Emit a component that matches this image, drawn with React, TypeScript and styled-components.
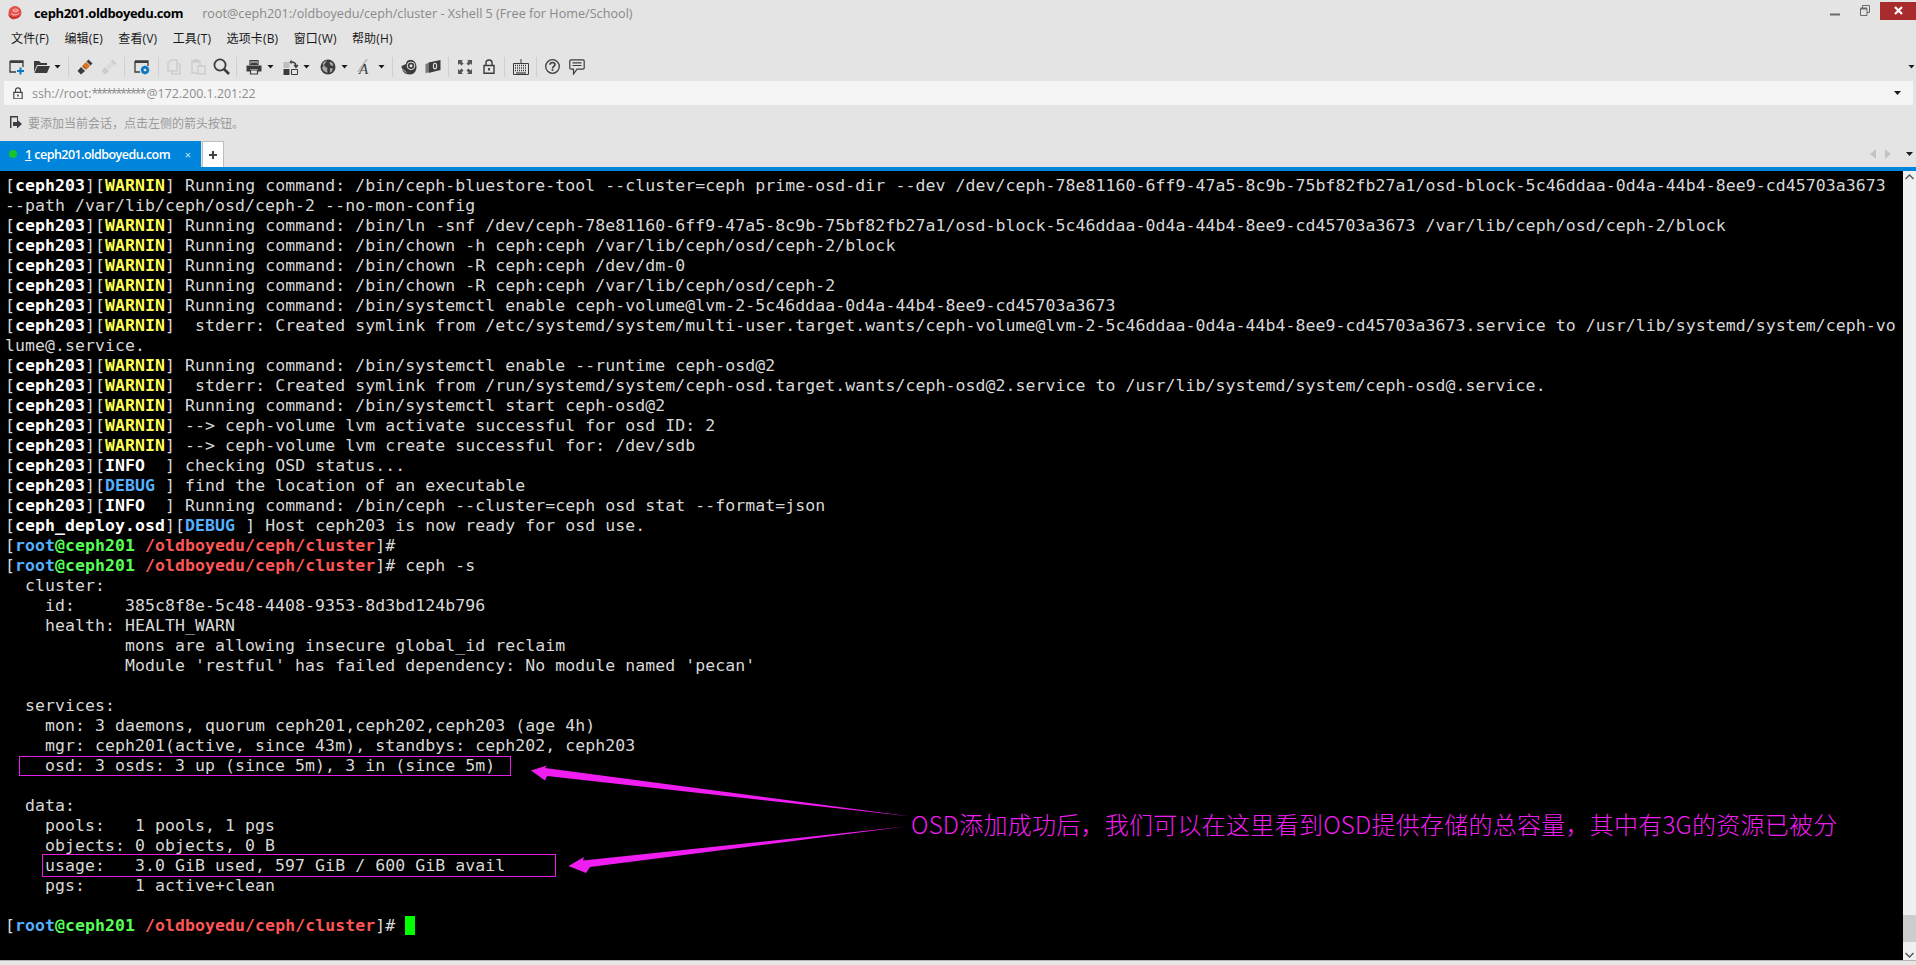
import React from "react"
import styled, { createGlobalStyle } from "styled-components"

const GlobalStyle = createGlobalStyle`
  html, body {
    margin: 0;
    padding: 0;
    background: #e4e4e4;
    overflow: hidden;
  }
  * { box-sizing: border-box; }
`

const uiFont = `"Open Sans", "Noto Sans CJK SC", sans-serif`

const Window = styled.div`
  width: 1916px;
  height: 965px;
  display: flex;
  flex-direction: column;
  background: #e4e4e4;
  font-family: ${uiFont};
  overflow: hidden;
`

const TitleBar = styled.div`
  height: 26px;
  display: flex;
  align-items: center;
  padding: 0 0 1px 7px;
  position: relative;
`

const SessionName = styled.span`
  margin-left: 12px;
  font-size: 13px;
  font-weight: 700;
  color: #000;
  letter-spacing: -0.36px;
`

const WindowTitle = styled.span`
  margin-left: 19px;
  font-size: 12.65px;
  color: #8a8a8a;
`

const WindowButtons = styled.div`
  margin-left: auto;
  height: 26px;
  display: flex;
  align-items: flex-start;
`

const WinButton = styled.div<{ $width: number; $danger?: boolean }>`
  width: ${(p) => p.$width}px;
  height: 18px;
  margin-top: 2px;
  display: flex;
  align-items: center;
  justify-content: center;
  background: ${(p) => (p.$danger ? "#a82c2c" : "transparent")};
`

const MenuBar = styled.div`
  height: 26px;
  display: flex;
  align-items: center;
  gap: 15.4px;
  padding: 0 0 2px 11px;
`

const MenuItem = styled.span`
  font-size: 12px;
  letter-spacing: 0.15px;
  color: #1a1a1a;
`

const ToolBar = styled.div`
  height: 29px;
  display: flex;
  align-items: center;
  padding-left: 9px;
  position: relative;
`

const ToolSlot = styled.div<{ $ml: number; $w: number }>`
  margin-left: ${(p) => p.$ml}px;
  width: ${(p) => p.$w}px;
  height: 20px;
  display: flex;
  align-items: center;
  justify-content: center;
`

const ToolSep = styled.div<{ $ml: number }>`
  margin-left: ${(p) => p.$ml}px;
  width: 1px;
  height: 20px;
  background: #cfcfcf;
`

const Caret = styled.div<{ $ml?: number; $color?: string }>`
  margin-left: ${(p) => p.$ml ?? 0}px;
  width: 7px;
  height: 4px;
  flex: none;
  background: ${(p) => p.$color ?? "#1c1c1c"};
  clip-path: polygon(0 0, 100% 0, 50% 100%);
`

const ToolEnd = styled(Caret)`
  margin-left: auto;
  margin-right: 1px;
`

const AddressBar = styled.div`
  height: 24px;
  margin: 0 3px 0 4px;
  background: #f5f5f5;
  display: flex;
  align-items: center;
  padding: 0 12px 0 9px;
`

const AddressText = styled.span`
  margin-left: 9px;
  font-size: 12.4px;
  color: #8c8c8c;
`

const Stars = styled.span`
  letter-spacing: -2px;
  margin-right: 2px;
`

const AddressCaret = styled(Caret)`
  margin-left: auto;
`

const HintBar = styled.div`
  height: 36px;
  display: flex;
  align-items: center;
  padding: 0 0 2px 9px;
`

const HintText = styled.span`
  margin-left: 6px;
  font-size: 12px;
  color: #9a9a9a;
  font-family: "Noto Sans CJK SC", sans-serif;
`

const TabStrip = styled.div`
  height: 26px;
  display: flex;
  align-items: stretch;
`

const Tab = styled.div`
  width: 201px;
  background: #0085dc;
  display: flex;
  align-items: center;
  padding-left: 9px;
  color: #fff;
`

const TabDot = styled.span`
  width: 8px;
  height: 8px;
  border-radius: 50%;
  background: #17c52a;
`

const TabLabel = styled.span`
  margin-left: 8px;
  font-size: 12.5px;
  font-weight: 600;
  letter-spacing: -0.54px;
`

const TabNumber = styled.span`
  text-decoration: underline;
`

const TabClose = styled.span`
  margin-left: auto;
  margin-right: 10px;
  font-size: 11px;
  color: #cfe6f7;
`

const NewTab = styled.div`
  margin-left: 1px;
  width: 22px;
  background: #fff;
  border: 1px solid #bdbdbd;
  border-bottom: none;
  display: flex;
  align-items: center;
  justify-content: center;
`

const TabNav = styled.div`
  margin-left: auto;
  padding-right: 3px;
  display: flex;
  align-items: center;
`

const NavArrow = styled.div<{ $flip?: boolean; $ml: number }>`
  margin-left: ${(p) => p.$ml}px;
  width: 6px;
  height: 10px;
  background: #c4c4c4;
  clip-path: ${(p) => (p.$flip ? "polygon(0 0, 100% 50%, 0 100%)" : "polygon(100% 0, 0 50%, 100% 100%)")};
`

const BlueRule = styled.div`
  height: 4px;
  background: #0085dc;
`

const TerminalRow = styled.div`
  height: 789px;
  display: flex;
`

const Terminal = styled.div`
  position: relative;
  flex: 1;
  background: #000;
  padding: 5px 0 0 5px;
  font-family: "DejaVu Sans Mono", monospace;
  font-size: 16.5px;
  letter-spacing: 0.07px;
  color: #d8d8d8;
  overflow: hidden;
`

const Line = styled.div`
  height: 20px;
  line-height: 20px;
  white-space: pre;
`

const Bold = styled.span<{ $color: string }>`
  font-weight: 700;
  color: ${(p) => p.$color};
`

const Cursor = styled.span`
  display: inline-block;
  width: 10px;
  height: 19px;
  background: #00ff00;
  vertical-align: top;
  margin-top: 0;
`

const Highlight = styled.div<{ $x: number; $y: number; $w: number; $h: number }>`
  position: absolute;
  left: ${(p) => p.$x}px;
  top: ${(p) => p.$y}px;
  width: ${(p) => p.$w}px;
  height: ${(p) => p.$h}px;
  border: 1px solid #e81ce8;
`

const ArrowLayer = styled.svg`
  position: absolute;
  left: 0;
  top: 0;
`

const Annotation = styled.div`
  position: absolute;
  left: 911px;
  top: 636px;
  height: 34px;
  line-height: 34px;
  font-family: "Noto Sans CJK SC", sans-serif;
  font-size: 24px;
  font-weight: 300;
  letter-spacing: 0.26px;
  color: #f01df0;
  white-space: pre;
`

const ScrollBar = styled.div`
  width: 13px;
  background: #f0f0f0;
  display: flex;
  flex-direction: column;
  align-items: center;
  position: relative;
`

const ScrollSpace = styled.div`
  flex: 1;
`

const ScrollThumb = styled.div`
  width: 13px;
  height: 27px;
  background: #cdcdcd;
  margin-bottom: 7px;
`

const ScrollEnd = styled.div`
  height: 11px;
  flex: none;
  display: flex;
  align-items: center;
`

const StatusStrip = styled.div`
  flex: 1;
  border-top: 1px solid #b4b4b4;
  background: #e6e6e6;
`

const dark = "#3c3c3c"
const soft = "#cdcdcd"

const IconNew = () => (
  <svg width="16" height="16" viewBox="0 0 16 16">
    <path d="M1 2h13v6M1 2v11h6" fill="none" stroke={dark} strokeWidth="1.3" />
    <path d="M1 2h13v2H1z" fill={dark} />
    <path d="M11.5 8.5v7M8 12h7" stroke="#0a79c2" strokeWidth="2" />
  </svg>
)

const IconOpen = () => (
  <svg width="17" height="16" viewBox="0 0 17 16">
    <path d="M1 2h5l2 2h6v2H4L1 13z" fill={dark} />
    <path d="M4.5 7H17l-3 7H1.5z" fill={dark} />
  </svg>
)

const IconPlug = ({ body, band }: { body: string; band: string }) => (
  <svg width="16" height="16" viewBox="0 0 16 16">
    <path d="M0.5 12l3.5-4 4 4-4 3.5z" fill={body} />
    <path d="M5 7l4-4 4 4-4 4z" fill={band} />
    <path d="M9.5 2.5l2-2 4 4-2 2z" fill={body} />
    <path d="M6 11.5l-2-2M8 9.5l-2-2" stroke={body} strokeWidth="1" />
  </svg>
)

const IconProps = () => (
  <svg width="16" height="16" viewBox="0 0 16 16">
    <path d="M1 2h13v5M1 2v11h5" fill="none" stroke={dark} strokeWidth="1.3" />
    <path d="M1 2h13v2H1z" fill={dark} />
    <circle cx="11" cy="11" r="3" fill="none" stroke="#0a79c2" strokeWidth="2" />
    <path d="M11 6.5v9M6.5 11h9M8 8l6 6M14 8l-6 6" stroke="#0a79c2" strokeWidth="1.2" />
    <circle cx="11" cy="11" r="1.3" fill="#e4e4e4" />
  </svg>
)

const IconCopy = () => (
  <svg width="16" height="16" viewBox="0 0 16 16" fill="none" stroke={soft} strokeWidth="1.4">
    <path d="M5 1h6v11H2V4z" />
    <path d="M11 5h3v10H6v-3" />
  </svg>
)

const IconPaste = () => (
  <svg width="16" height="16" viewBox="0 0 16 16" fill="none" stroke={soft} strokeWidth="1.4">
    <path d="M2 2h8v12H2z" />
    <path d="M8 7h7v8H8z" fill="#e4e4e4" />
    <path d="M4 1h4v2H4z" fill={soft} />
  </svg>
)

const IconSearch = () => (
  <svg width="17" height="17" viewBox="0 0 17 17" fill="none" stroke={dark}>
    <circle cx="7" cy="7" r="5.6" strokeWidth="1.8" />
    <path d="M11 11l5 5" strokeWidth="2.6" />
  </svg>
)

const IconPrint = () => (
  <svg width="16" height="16" viewBox="0 0 16 16">
    <path d="M4 1.5h8v4H4z" fill="none" stroke={dark} strokeWidth="1.2" />
    <path d="M5 3h6M5 4.5h6" stroke={dark} />
    <path d="M0.5 6.5h15v6H12V10H4v2.5H0.5z" fill={dark} />
    <path d="M4.5 11h7v4h-7z" fill="none" stroke={dark} strokeWidth="1.2" />
  </svg>
)

const IconTransfer = () => (
  <svg width="16" height="16" viewBox="0 0 16 16">
    <path d="M0.5 3h6v6h-6z" fill="#bdbdbd" />
    <path d="M0.5 10h6v6h-6z" fill={dark} />
    <path d="M8.5 10.5h6v5h-6z" fill="none" stroke={dark} />
    <path d="M8 3c3 0 5 1 5 4M11 6l2 2.5L15 6" fill="none" stroke={dark} strokeWidth="1.3" />
    <path d="M8.5 0.5v5L6.5 3z" fill={dark} />
  </svg>
)

const IconGlobe = () => (
  <svg width="16" height="16" viewBox="0 0 16 16">
    <circle cx="8" cy="8" r="7.5" fill={dark} />
    <path d="M7 1.5c-2 .6-4 2-4.5 4l2 1 1.5 2 1.5.3-.5 2.7 1 2c-3-.2-5-1.5-6-4.5" fill="#a8a8a8" />
    <path d="M10 2.5l2.5 1.5 1 3-2.5-.5-1.5-2zM10 9l3 .5-1.5 3.5-1.5.5z" fill="#a8a8a8" />
  </svg>
)

const IconFont = () => (
  <svg width="16" height="20" viewBox="0 0 16 20">
    <path d="M0 15L9 2h2L2 15z" fill="#b8b8b8" />
    <text x="2" y="17" fontFamily="Liberation Serif, serif" fontStyle="italic" fontSize="15" fill={dark}>A</text>
  </svg>
)

const IconShell = () => (
  <svg width="16" height="16" viewBox="0 0 16 16">
    <path d="M0.500 7c0 5 3.500 8.500 8.500 8.500 4 0 6.500-3.500 6.500-7.500S13 .8 9.500.8C6.500.8 5 3 5 5" fill={dark} />
    <circle cx="10" cy="6.800" r="3.800" fill="none" stroke="#e4e4e4" strokeWidth="1" />
    <circle cx="10" cy="6.800" r="1.500" fill="#e4e4e4" />
    <path d="M0.500 9.500l5 4" stroke="#e4e4e4" strokeWidth="0.800" />
  </svg>
)

const IconBook = () => (
  <svg width="16" height="16" viewBox="0 0 16 16">
    <path d="M0.500 5l3-1v9l-3 1.500z" fill="#777" />
    <path d="M3.500 3.500L15.500 1v10L3.500 14z" fill={dark} />
    <ellipse cx="10" cy="7" rx="1.600" ry="2.800" fill="none" stroke="#e4e4e4" strokeWidth="1.100" />
  </svg>
)

const IconFull = () => (
  <svg width="14" height="14" viewBox="0 0 14 14" fill="#555">
    <path d="M0 0h5L3.500 1.500 5.500 3.500 3.500 5.500 1.500 3.500 0 5z" />
    <path d="M14 0H9l1.500 1.500-2 2 2 2 2-2L14 5z" />
    <path d="M0 14h5l-1.500-1.500 2-2-2-2-2 2L0 9z" />
    <path d="M14 14H9l1.500-1.500-2-2 2-2 2 2L14 9z" />
  </svg>
)

const IconLock = ({ size = 12, color = dark }: { size?: number; color?: string }) => (
  <svg width={size} height={(size * 15) / 12} viewBox="0 0 12 15" fill="none" stroke={color} strokeWidth="1.400">
    <path d="M3 6V3.600C3 1.900 4.300 1 6 1s3 .9 3 2.600V6" />
    <path d="M1 6.500h10v7.800H1z" />
    <path d="M6 9v2.500" strokeWidth="1.800" />
  </svg>
)

const IconKeyboard = () => (
  <svg width="16" height="16" viewBox="0 0 16 16">
    <path d="M8 0v4" stroke={dark} />
    <path d="M0.500 4.500h15v11H0.500z" fill="none" stroke={dark} />
    <path d="M2 6.500h12M2 9h12M2 11.500h12" stroke={dark} strokeDasharray="1 1" strokeWidth="1.400" />
    <path d="M3 14h10" stroke={dark} strokeWidth="1.200" />
  </svg>
)

const IconHelp = () => (
  <svg width="15" height="15" viewBox="0 0 15 15" fill="none" stroke={dark} strokeWidth="1.300">
    <circle cx="7.500" cy="7.500" r="6.800" />
    <path d="M5 5.800c0-1.500 1.200-2.300 2.500-2.300s2.500.8 2.500 2.100c0 1.900-2.500 1.900-2.500 3.900" strokeWidth="1.600" />
    <path d="M7.500 10.200v1.700" strokeWidth="1.700" />
  </svg>
)

const IconChat = () => (
  <svg width="16" height="16" viewBox="0 0 16 16" fill="none" stroke={dark} strokeWidth="1.200">
    <path d="M2 .8h12c.7 0 1.200.5 1.200 1.200v7c0 .7-.5 1.200-1.200 1.200H8L4.500 15v-4.800H2C1.300 10.200.8 9.700.8 9V2C.8 1.300 1.300.8 2 .8z" />
    <path d="M3.500 3.800h9M3.500 6.500h9" />
  </svg>
)

const IconAddHint = () => (
  <svg width="13" height="14" viewBox="0 0 13 14">
    <path d="M1 1h8v5H8V2.500H2.500V13H1z" fill={dark} />
    <path d="M4 7h4V4.500L13 9l-5 4.500V11H4z" fill={dark} />
  </svg>
)

const Logo = () => (
  <svg width="15" height="15" viewBox="0 0 15 15">
    <circle cx="8" cy="7.500" r="6.500" fill="#e4504c" />
    <path d="M1 9c1.500-.3 2.500-1 3-2.500L1 9.500C2 12.500 4.500 14.500 8 14.500z" fill="#d23c39" />
    <path d="M4.500 8.500c2 2 5.500 2 7.500-.5M6 5.500c1-2 4-2 5 0-1 1-3 1.500-5 0z" fill="none" stroke="#f9bcb6" strokeWidth="1.100" />
    <path d="M3 11.500c3 1.800 7 1.500 10-1" fill="none" stroke="#ab1f1f" strokeWidth="1" />
  </svg>
)

type Tool =
  | { sep: number }
  | { caret: number }
  | { ml: number; w: number; icon: React.ReactNode }

const tools: Tool[] = [
  { ml: 0, w: 16, icon: <IconNew /> },
  { ml: 8, w: 17, icon: <IconOpen /> },
  { caret: 4 },
  { sep: 7 },
  { ml: 8, w: 16, icon: <IconPlug body={dark} band="#d9731f" /> },
  { ml: 8, w: 16, icon: <IconPlug body={soft} band="#dcdcdc" /> },
  { sep: 7 },
  { ml: 9, w: 16, icon: <IconProps /> },
  { sep: 8 },
  { ml: 7, w: 16, icon: <IconCopy /> },
  { ml: 8, w: 16, icon: <IconPaste /> },
  { ml: 7, w: 17, icon: <IconSearch /> },
  { sep: 6 },
  { ml: 9, w: 16, icon: <IconPrint /> },
  { caret: 5 },
  { ml: 9, w: 16, icon: <IconTransfer /> },
  { caret: 4 },
  { ml: 10, w: 16, icon: <IconGlobe /> },
  { caret: 5 },
  { ml: 9, w: 16, icon: <IconFont /> },
  { caret: 5 },
  { sep: 7 },
  { ml: 8, w: 16, icon: <IconShell /> },
  { ml: 8, w: 16, icon: <IconBook /> },
  { sep: 7 },
  { ml: 9, w: 14, icon: <IconFull /> },
  { ml: 11, w: 12, icon: <IconLock /> },
  { sep: 9 },
  { ml: 8, w: 16, icon: <IconKeyboard /> },
  { sep: 7 },
  { ml: 8, w: 15, icon: <IconHelp /> },
  { ml: 9, w: 16, icon: <IconChat /> },
]

const menus = ["文件(F)", "编辑(E)", "查看(V)", "工具(T)", "选项卡(B)", "窗口(W)", "帮助(H)"]

const WHITE = "#ffffff"
const YELLOW = "#ffff55"
const BLUE = "#55b0ff"
const GREEN = "#55ff55"
const RED = "#ff5555"

const levelColor: Record<string, string> = {
  "WARNIN": YELLOW,
  "INFO  ": WHITE,
  "DEBUG ": BLUE,
}

const Deploy = ({ level, text, host = "ceph203" }: { level: string; text: string; host?: string }) => (
  <Line>
    [<Bold $color={WHITE}>{host}</Bold>][<Bold $color={levelColor[level]}>{level}</Bold>] {text}
  </Line>
)

const Prompt = ({ children }: { children?: React.ReactNode }) => (
  <Line>
    [<Bold $color={BLUE}>root</Bold>
    <Bold $color={GREEN}>@ceph201</Bold> <Bold $color={RED}>/oldboyedu/ceph/cluster</Bold>]# {children}
  </Line>
)

const W = "WARNIN"

const statusLines = [
  "  cluster:",
  "    id:     385c8f8e-5c48-4408-9353-8d3bd124b796",
  "    health: HEALTH_WARN",
  "            mons are allowing insecure global_id reclaim",
  "            Module 'restful' has failed dependency: No module named 'pecan'",
  " ",
  "  services:",
  "    mon: 3 daemons, quorum ceph201,ceph202,ceph203 (age 4h)",
  "    mgr: ceph201(active, since 43m), standbys: ceph202, ceph203",
  "    osd: 3 osds: 3 up (since 5m), 3 in (since 5m)",
  " ",
  "  data:",
  "    pools:   1 pools, 1 pgs",
  "    objects: 0 objects, 0 B",
  "    usage:   3.0 GiB used, 597 GiB / 600 GiB avail",
  "    pgs:     1 active+clean",
  " ",
]

export default function App() {
  return (
    <>
      <GlobalStyle />
      <Window>
        <TitleBar>
          <Logo />
          <SessionName>ceph201.oldboyedu.com</SessionName>
          <WindowTitle>root@ceph201:/oldboyedu/ceph/cluster - Xshell 5 (Free for Home/School)</WindowTitle>
          <WindowButtons>
            <WinButton $width={30}>
              <svg width="10" height="18" viewBox="0 0 10 18">
                <path d="M0 12.500h10" stroke="#6a6a6a" strokeWidth="2" />
              </svg>
            </WinButton>
            <WinButton $width={30}>
              <svg width="10" height="11" viewBox="0 0 10 11" fill="none" stroke="#6a6a6a">
                <path d="M.5 3.500h6.500v7H.5zM2.500 3.500V.5h7v7H7" />
                <path d="M.5 3.500h6.500" strokeWidth="2" />
              </svg>
            </WinButton>
            <WinButton $width={36} $danger>
              <svg width="9" height="9" viewBox="0 0 9 9">
                <path d="M1 1l7 7M8 1l-7 7" stroke="#fff" strokeWidth="2.200" />
              </svg>
            </WinButton>
          </WindowButtons>
        </TitleBar>

        <MenuBar>
          {menus.map((m) => (
            <MenuItem key={m}>{m}</MenuItem>
          ))}
        </MenuBar>

        <ToolBar>
          {tools.map((t, i) => {
            if ("sep" in t) return <ToolSep key={i} $ml={t.sep} />
            if ("caret" in t) return <Caret key={i} $ml={t.caret} />
            return (
              <ToolSlot key={i} $ml={t.ml} $w={t.w}>
                {t.icon}
              </ToolSlot>
            )
          })}
          <ToolEnd />
        </ToolBar>

        <AddressBar>
          <IconLock size={10} color="#444" />
          <AddressText>
            ssh://root:<Stars>***********</Stars>@172.200.1.201:22
          </AddressText>
          <AddressCaret />
        </AddressBar>

        <HintBar>
          <IconAddHint />
          <HintText>要添加当前会话，点击左侧的箭头按钮。</HintText>
        </HintBar>

        <TabStrip>
          <Tab>
            <TabDot />
            <TabLabel>
              <TabNumber>1</TabNumber> ceph201.oldboyedu.com
            </TabLabel>
            <TabClose>×</TabClose>
          </Tab>
          <NewTab>
            <svg width="10" height="10" viewBox="0 0 10 10">
              <path d="M5 1v8M1 5h8" stroke="#444" strokeWidth="2" />
            </svg>
          </NewTab>
          <TabNav>
            <NavArrow $ml={0} />
            <NavArrow $ml={9} $flip />
            <Caret $ml={15} />
          </TabNav>
        </TabStrip>
        <BlueRule />

        <TerminalRow>
          <Terminal>
            <Deploy level={W} text="Running command: /bin/ceph-bluestore-tool --cluster=ceph prime-osd-dir --dev /dev/ceph-78e81160-6ff9-47a5-8c9b-75bf82fb27a1/osd-block-5c46ddaa-0d4a-44b4-8ee9-cd45703a3673" />
            <Line>--path /var/lib/ceph/osd/ceph-2 --no-mon-config</Line>
            <Deploy level={W} text="Running command: /bin/ln -snf /dev/ceph-78e81160-6ff9-47a5-8c9b-75bf82fb27a1/osd-block-5c46ddaa-0d4a-44b4-8ee9-cd45703a3673 /var/lib/ceph/osd/ceph-2/block" />
            <Deploy level={W} text="Running command: /bin/chown -h ceph:ceph /var/lib/ceph/osd/ceph-2/block" />
            <Deploy level={W} text="Running command: /bin/chown -R ceph:ceph /dev/dm-0" />
            <Deploy level={W} text="Running command: /bin/chown -R ceph:ceph /var/lib/ceph/osd/ceph-2" />
            <Deploy level={W} text="Running command: /bin/systemctl enable ceph-volume@lvm-2-5c46ddaa-0d4a-44b4-8ee9-cd45703a3673" />
            <Deploy level={W} text=" stderr: Created symlink from /etc/systemd/system/multi-user.target.wants/ceph-volume@lvm-2-5c46ddaa-0d4a-44b4-8ee9-cd45703a3673.service to /usr/lib/systemd/system/ceph-vo" />
            <Line>lume@.service.</Line>
            <Deploy level={W} text="Running command: /bin/systemctl enable --runtime ceph-osd@2" />
            <Deploy level={W} text=" stderr: Created symlink from /run/systemd/system/ceph-osd.target.wants/ceph-osd@2.service to /usr/lib/systemd/system/ceph-osd@.service." />
            <Deploy level={W} text="Running command: /bin/systemctl start ceph-osd@2" />
            <Deploy level={W} text="--> ceph-volume lvm activate successful for osd ID: 2" />
            <Deploy level={W} text="--> ceph-volume lvm create successful for: /dev/sdb" />
            <Deploy level="INFO  " text="checking OSD status..." />
            <Deploy level="DEBUG " text="find the location of an executable" />
            <Deploy level="INFO  " text="Running command: /bin/ceph --cluster=ceph osd stat --format=json" />
            <Deploy host="ceph_deploy.osd" level="DEBUG " text="Host ceph203 is now ready for osd use." />
            <Prompt />
            <Prompt>ceph -s</Prompt>
            {statusLines.map((l, i) => (
              <Line key={i}>{l}</Line>
            ))}
            <Prompt>
              <Cursor />
            </Prompt>

            <Highlight $x={19} $y={585} $w={492} $h={20} />
            <Highlight $x={42} $y={683} $w={514} $h={23} />
            <ArrowLayer width="1903" height="789" viewBox="0 0 1903 789">
              <path d="M531 599.500L547 594.500 545 597 911 645.500 547 605 545 609.500z" fill="#f01df0" />
              <path d="M568.500 695L584 686 583 689.500 906 655.500 590 696 586 702z" fill="#f01df0" />
            </ArrowLayer>
            <Annotation>OSD添加成功后，我们可以在这里看到OSD提供存储的总容量，其中有3G的资源已被分</Annotation>
          </Terminal>
          <ScrollBar>
            <ScrollEnd>
              <svg width="9" height="6" viewBox="0 0 9 6">
                <path d="M.5 5l4-4 4 4" fill="none" stroke="#555" strokeWidth="1.400" />
              </svg>
            </ScrollEnd>
            <ScrollSpace />
            <ScrollThumb />
            <ScrollEnd>
              <svg width="9" height="6" viewBox="0 0 9 6">
                <path d="M.5 1l4 4 4-4" fill="none" stroke="#555" strokeWidth="1.400" />
              </svg>
            </ScrollEnd>
          </ScrollBar>
        </TerminalRow>
        <StatusStrip />
      </Window>
    </>
  )
}
